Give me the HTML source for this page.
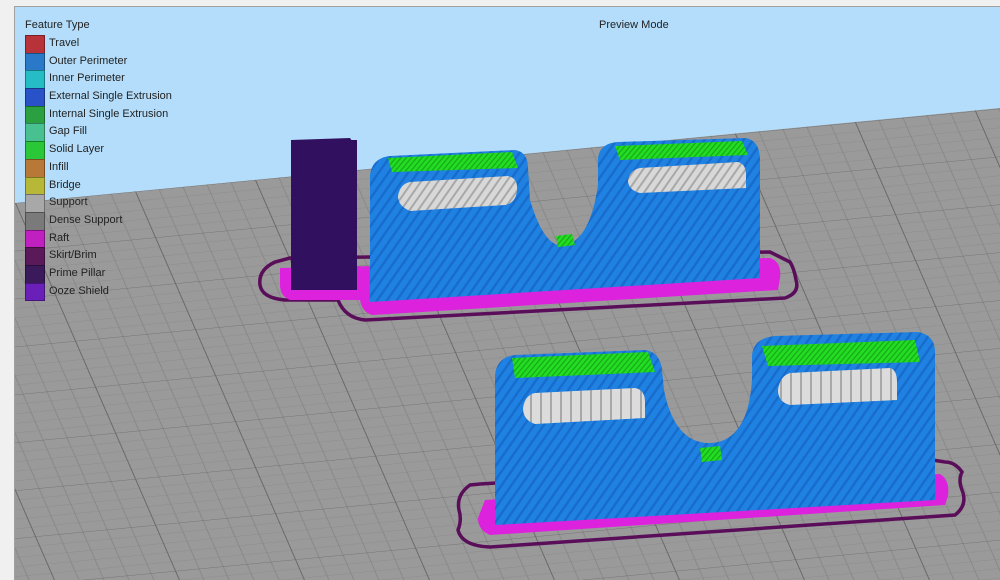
<!DOCTYPE html>
<html><head><meta charset="utf-8"><style>
body{margin:0;width:1000px;height:580px;overflow:hidden;background:#f0f0f0;font-family:"Liberation Sans",sans-serif;}
svg{position:absolute;left:0;top:0}
.lg{position:absolute;left:25px;top:35px;font-size:11px;color:#222}
.lg div{height:17.7px;line-height:17.7px;position:relative;padding-left:24px;white-space:nowrap}
.lg span{position:absolute;left:0;top:0;width:18px;height:16.7px;border:0.5px solid rgba(0,0,0,.35)}
</style></head><body>
<svg width="1000" height="580" viewBox="0 0 1000 580">
<defs>
<pattern id="g" width="100" height="100" patternUnits="userSpaceOnUse" patternTransform="matrix(1.2 -0.115 0.2 0.46 15 203)">
<rect width="100" height="100" fill="#9a9a9a"/>
<g stroke="#878787" stroke-width="0.8">
<line x1="20" y1="0" x2="20" y2="100"/><line x1="40" y1="0" x2="40" y2="100"/><line x1="60" y1="0" x2="60" y2="100"/><line x1="80" y1="0" x2="80" y2="100"/>
<line x1="0" y1="20" x2="100" y2="20"/><line x1="0" y1="40" x2="100" y2="40"/><line x1="0" y1="60" x2="100" y2="60"/><line x1="0" y1="80" x2="100" y2="80"/>
</g>
<g stroke="#666" stroke-width="1.6"><line x1="0" y1="0" x2="0" y2="100"/><line x1="0" y1="0" x2="100" y2="0"/></g>
</pattern>
<pattern id="bl" width="8" height="8" patternUnits="userSpaceOnUse" patternTransform="rotate(-55)">
<rect width="8" height="8" fill="#1f82e2"/><rect width="8" height="2.5" fill="#176ccc"/>
</pattern>
<pattern id="gr" width="4" height="4" patternUnits="userSpaceOnUse" patternTransform="rotate(-50)">
<rect width="4" height="4" fill="#22dd22"/><rect width="4" height="1.2" fill="#18a818"/>
</pattern>
<pattern id="gy" width="7" height="7" patternUnits="userSpaceOnUse" patternTransform="rotate(-55)">
<rect width="7" height="7" fill="#d8d8d8"/><rect width="7" height="2" fill="#a8a8a8"/>
</pattern>
<pattern id="gy2" width="10" height="10" patternUnits="userSpaceOnUse">
<rect width="10" height="10" fill="#dcdcdc"/><rect width="2" height="10" fill="#a8a8a8"/>
</pattern>
</defs>
<rect x="15" y="7" width="985" height="573" fill="#b3ddfa"/>
<rect x="14.5" y="6.5" width="990" height="580" fill="none" stroke="#a0a0a0"/>
<polygon points="15,203 1000,108 1000,580 15,580" fill="url(#g)"/>
<text x="599" y="28" font-size="11" fill="#222">Preview Mode</text>
<text x="25" y="28" font-size="11" fill="#222">Feature Type</text>

<!-- object 1 -->
<path d="M275,262 Q258,270 260,285 Q262,298 285,300 L338,300 Q345,318 365,320 L785,298 Q800,293 796,280 Q794,268 790,262 L770,252 L290,258Z" fill="none" stroke="#5a0e5a" stroke-width="3.5"/>
<path d="M280,268 L770,258 Q782,262 780,278 L778,290 L372,315 Q362,312 360,300 L290,300 Q280,296 280,285Z" fill="#dd22dd"/>
<rect x="291" y="140" width="66" height="150" fill="#2e0f5c"/>
<polygon points="291,140 350,138 357,148 357,290 291,290" fill="#321060"/>
<path d="M370,175 Q372,158 390,156 L515,150 Q528,152 528,168 L530,200 Q545,250 565,245 Q590,240 598,185 L598,158 Q600,143 618,142 L745,138 Q760,140 760,160 L760,278 L370,302Z" fill="url(#bl)"/>
<polygon points="388,158 512,152 518,168 392,172" fill="url(#gr)"/>
<polygon points="615,146 742,141 748,155 620,160" fill="url(#gr)"/>
<polygon points="556,236 572,234 575,245 558,247" fill="url(#gr)"/>
<path d="M410,182 L508,176 Q518,178 517,190 Q516,203 505,205 L410,211 Q398,206 398,196 Q400,184 410,182Z" fill="url(#gy)"/>
<path d="M640,168 L738,162 Q746,164 746,175 L746,188 L640,193 Q628,190 628,180 Q630,170 640,168Z" fill="url(#gy)"/>

<!-- object 2 -->
<path d="M470,485 Q456,495 459,510 Q462,520 458,530 Q462,546 490,547 L955,515 Q968,505 962,490 Q958,480 962,472 Q955,462 945,462 L920,458 L480,484Z" fill="none" stroke="#5a0e5a" stroke-width="3.5"/>
<path d="M485,500 L940,474 Q950,480 948,496 L945,505 L490,535 Q478,530 478,518Z" fill="#dd22dd"/>
<path d="M495,375 Q497,357 515,355 L645,350 Q660,352 662,370 L664,390 Q675,445 712,443 Q748,440 752,380 L752,355 Q754,338 775,336 L918,332 Q935,335 935,352 L935,500 L495,525Z" fill="url(#bl)"/>
<polygon points="512,358 648,352 655,372 515,378" fill="url(#gr)"/>
<polygon points="762,346 915,340 920,362 768,366" fill="url(#gr)"/>
<polygon points="700,448 720,446 722,460 702,462" fill="url(#gr)"/>
<path d="M535,393 L635,388 Q645,390 645,402 L645,418 L535,424 Q523,420 523,408 Q525,395 535,393Z" fill="url(#gy2)"/>
<path d="M790,373 L890,368 Q897,370 897,382 L897,400 L790,405 Q778,402 778,390 Q780,376 790,373Z" fill="url(#gy2)"/>
</svg>
<div class="lg">
<div><span style="background:#b8323a"></span>Travel</div>
<div><span style="background:#2a78c8"></span>Outer Perimeter</div>
<div><span style="background:#26bcc6"></span>Inner Perimeter</div>
<div><span style="background:#2a52c8"></span>External Single Extrusion</div>
<div><span style="background:#2aa040"></span>Internal Single Extrusion</div>
<div><span style="background:#48c090"></span>Gap Fill</div>
<div><span style="background:#2ac838"></span>Solid Layer</div>
<div><span style="background:#b87838"></span>Infill</div>
<div><span style="background:#b8b838"></span>Bridge</div>
<div><span style="background:#a8a8a8"></span>Support</div>
<div><span style="background:#7a7a7a"></span>Dense Support</div>
<div><span style="background:#c020c0"></span>Raft</div>
<div><span style="background:#5a1a5a"></span>Skirt/Brim</div>
<div><span style="background:#3a1a5a"></span>Prime Pillar</div>
<div><span style="background:#6a20b8"></span>Ooze Shield</div>
</div>
</body></html>
